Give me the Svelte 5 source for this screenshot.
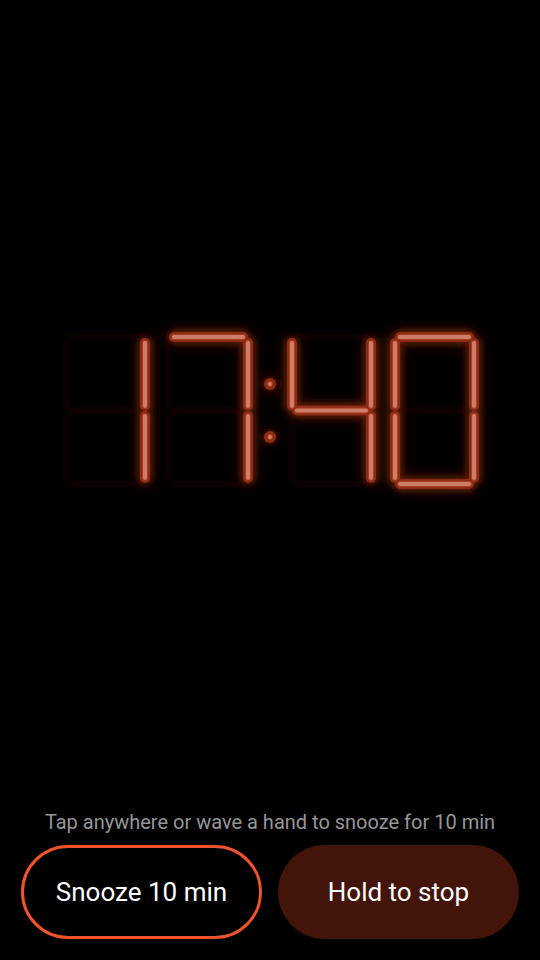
<script lang="ts">
	type Line = [number, number, number, number];

	// a, b, c, d, e, f, g in the usual seven segment order
	const segments: Line[] = [
		[5, 0, 74, 0],
		[79, 6, 79, 69],
		[79, 79, 79, 141],
		[74, 147, 5, 147],
		[0, 141, 0, 79],
		[0, 69, 0, 6],
		[5, 73.5, 74, 73.5]
	];

	const lit: Record<string, number[]> = {
		'0': [0, 1, 2, 3, 4, 5],
		'1': [1, 2],
		'2': [0, 1, 6, 4, 3],
		'3': [0, 1, 6, 2, 3],
		'4': [5, 6, 1, 2],
		'5': [0, 5, 6, 2, 3],
		'6': [0, 5, 4, 3, 2, 6],
		'7': [0, 1, 2],
		'8': [0, 1, 2, 3, 4, 5, 6],
		'9': [0, 1, 2, 3, 5, 6]
	};

	const positions = [66, 169, 292, 395];
	const dots = [74, 127];

	let time = $state('17:40');
	let digits = $derived(time.replace(':', '').split(''));
</script>

{#snippet tubes(kind: string)}
	<g class={kind}>
		{#each digits as digit, i}
			<g transform="translate({positions[i]} 27)">
				{#each lit[digit] as s}
					<line x1={segments[s][0]} y1={segments[s][1]} x2={segments[s][2]} y2={segments[s][3]} />
				{/each}
			</g>
		{/each}
		{#each dots as y}
			<line class="dot" x1="270" y1={y} x2="270" y2={y} />
		{/each}
	</g>
{/snippet}

<div class="alarm">
	<main>
		<svg viewBox="0 0 540 200" role="img" aria-label={time}>
			<defs>
				<filter id="near" filterUnits="userSpaceOnUse" x="0" y="0" width="540" height="200">
					<feGaussianBlur stdDeviation="3" />
				</filter>
				<filter id="far" filterUnits="userSpaceOnUse" x="0" y="0" width="540" height="200">
					<feGaussianBlur stdDeviation="8" />
				</filter>
				<filter id="dim" filterUnits="userSpaceOnUse" x="0" y="0" width="540" height="200">
					<feGaussianBlur stdDeviation="2" />
				</filter>
			</defs>
			<g class="off" filter="url(#dim)">
				{#each positions as x}
					<g transform="translate({x} 27)">
						{#each segments as [x1, y1, x2, y2]}
							<line {x1} {y1} {x2} {y2} />
						{/each}
					</g>
				{/each}
			</g>
			<g filter="url(#far)">{@render tubes('far')}</g>
			<g filter="url(#near)">{@render tubes('near')}</g>
			{@render tubes('glass')}
			{@render tubes('rim')}
			{@render tubes('core')}
		</svg>
	</main>

	<footer>
		<p>Tap anywhere or wave a hand to snooze for 10 min</p>
		<div class="actions">
			<button type="button" class="snooze">Snooze 10 min</button>
			<button type="button" class="stop">Hold to stop</button>
		</div>
	</footer>
</div>

<style>
	:global(body) {
		margin: 0;
		background: #000;
	}

	.alarm {
		display: flex;
		flex-direction: column;
		min-height: 100vh;
		box-sizing: border-box;
		background: #000;
		color: #fff;
		font-family: Roboto, 'Noto Sans', sans-serif;
	}

	main {
		flex: 1;
		display: flex;
		align-items: center;
		justify-content: center;
		padding-top: 10px;
	}

	svg {
		display: block;
		width: 100%;
	}

	line {
		fill: none;
		stroke-linecap: round;
	}

	.off line {
		stroke: #090402;
		stroke-width: 7px;
	}

	.far line {
		stroke: #421205;
		stroke-width: 12px;
	}

	.near line {
		stroke: #6a1d08;
		stroke-width: 12px;
	}

	.glass line {
		stroke: #8a2b14;
		stroke-width: 10px;
	}

	.glass .dot {
		stroke-width: 12px;
	}

	.rim line {
		stroke: #a93c22;
		stroke-width: 6px;
	}

	.core line {
		stroke: #cb7d67;
		stroke-width: 4px;
	}

	footer {
		padding: 0 21px 21px;
	}

	p {
		margin: 0 0 11px;
		color: #969696;
		font-size: 20px;
		line-height: 24px;
		text-align: center;
	}

	.actions {
		display: grid;
		grid-template-columns: 1fr 1fr;
		gap: 16px;
	}

	button {
		height: 94px;
		padding: 0;
		border: 3px solid transparent;
		border-radius: 47px;
		color: #fff;
		font-family: inherit;
		font-size: 26px;
		line-height: 32px;
		cursor: pointer;
	}

	.snooze {
		border-color: #f1532d;
		background: #000;
	}

	.stop {
		border-color: #431409;
		background: #431409;
	}
</style>
